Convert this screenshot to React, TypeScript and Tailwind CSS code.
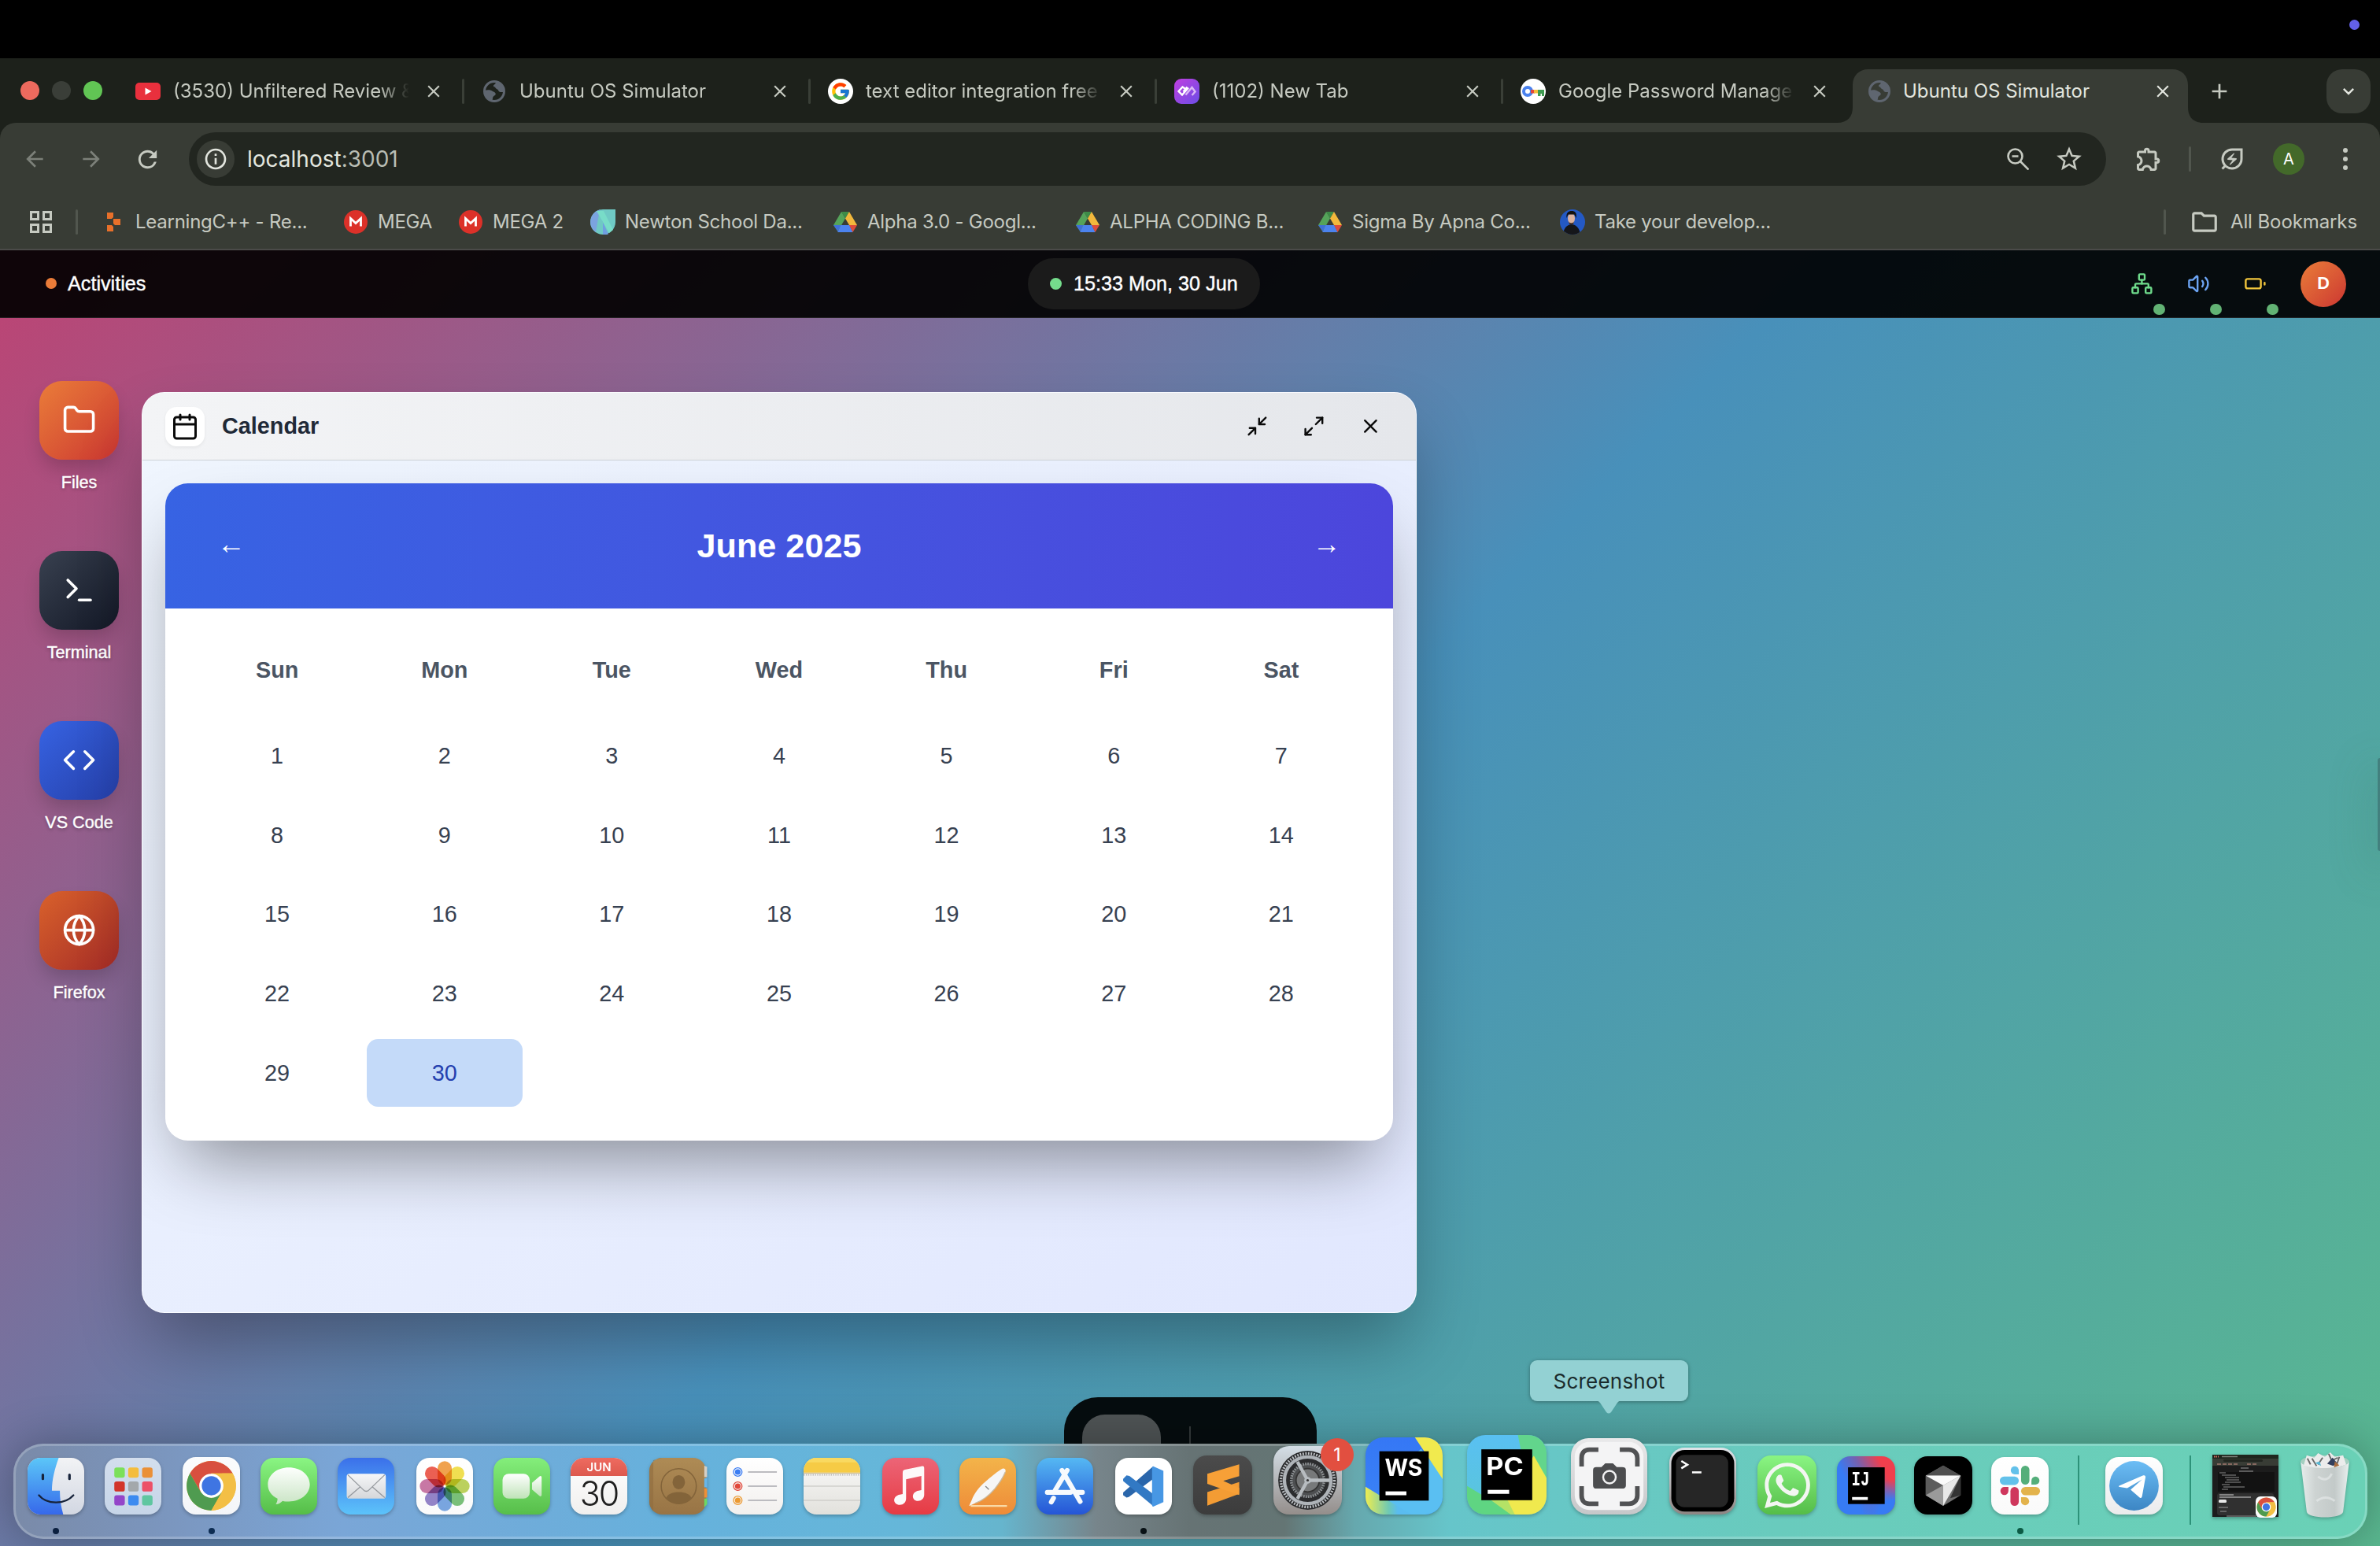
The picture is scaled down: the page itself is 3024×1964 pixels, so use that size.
import React from "react";
import {
  Calendar,
  Code,
  Folder,
  Globe,
  Maximize2,
  Minimize2,
  Network,
  Terminal,
  Volume2,
  X,
} from "lucide-react";
import {
  MdArrowBack,
  MdArrowForward,
  MdClose,
  MdAdd,
  MdKeyboardArrowDown,
  MdOutlineEnergySavingsLeaf,
  MdOutlineExtension,
  MdOutlineFolder,
  MdOutlineInfo,
  MdRefresh,
  MdStarOutline,
} from "react-icons/md";
import { FcGoogle } from "react-icons/fc";
import { FaWhatsapp } from "react-icons/fa";

/* ---------- favicons ---------- */

function YouTubeIcon() {
  return (
    <svg viewBox="0 0 32 32" className="h-8 w-8">
      <rect x="0" y="5" width="32" height="22" rx="5" fill="#e9303d" />
      <path d="M12.5 11.5v9l8-4.5z" fill="#fff" />
    </svg>
  );
}

function EarthIcon() {
  return (
    <svg viewBox="0 0 32 32" className="h-8 w-8">
      <circle cx="16" cy="16" r="12.500" fill="none" stroke="#5f6670" strokeWidth="3" />
      <path
        d="M17 3c2 2 0 4-1 4.500-2 1-1 3 1 3 1 3 3 2 4 4 1 3 4 3 8 2 0-8-5-13-12-13.500zM3 15c4-1 9-1 11 1 3 1 5 3 3 5-2 1-3 2-3 4 0 1-1 3-1 4C7 27 3 22 3 15z"
        fill="#5f6670"
      />
    </svg>
  );
}

function GoogleIcon() {
  return (
    <span className="flex h-8 w-8 items-center justify-center rounded-full bg-white">
      <FcGoogle className="h-[26px] w-[26px]" />
    </span>
  );
}

function PurpleIcon() {
  return (
    <svg viewBox="0 0 32 32" className="h-8 w-8">
      <defs>
        <linearGradient id="purple" x1="0" y1="0" x2="1" y2="1">
          <stop offset="0" stopColor="#c13fe0" />
          <stop offset="1" stopColor="#6b4de6" />
        </linearGradient>
      </defs>
      <rect width="32" height="32" rx="9" fill="url(#purple)" />
      <g fill="none" strokeWidth="2.400" strokeLinejoin="miter">
        <path d="M16.500 10.500l-5 6M13.500 12.500l-3-2-5 5.500 4.500 4.500 8-9" stroke="#fff" />
        <path d="M14.500 20.500l8-9.500 4 5.500-4 4.500" stroke="#d9b8f5" />
      </g>
    </svg>
  );
}

function KeyIcon() {
  return (
    <svg viewBox="0 0 32 32" className="h-8 w-8">
      <circle cx="16" cy="16" r="16" fill="#fff" />
      <circle cx="9" cy="16" r="5" fill="none" stroke="#4a82ee" strokeWidth="4" />
      <rect x="13" y="14" width="5" height="4.500" fill="#e2483a" />
      <rect x="17" y="14" width="6" height="4.500" fill="#f3bc3c" />
      <path d="M22 14h8v8h-3v-3h-1.500v3H22z" fill="#3f9b51" />
    </svg>
  );
}

function LearnIcon() {
  return (
    <svg viewBox="0 0 32 32" className="h-8 w-8">
      <g fill="#e8702a">
        <path d="M8 4h8v6l-2 2H8z" />
        <path d="M16 12h9v8h-7l-2-2z" />
        <path d="M8 20h6l2 2v6H8z" />
      </g>
    </svg>
  );
}

function MegaIcon() {
  return (
    <svg viewBox="0 0 32 32" className="h-8 w-8">
      <circle cx="16" cy="16" r="15" fill="#dc3129" />
      <path d="M9.500 21.500v-10l6.500 6 6.500-6v10" fill="none" stroke="#fff" strokeWidth="2.800" />
    </svg>
  );
}

function NewtonIcon() {
  return (
    <svg viewBox="0 0 32 32" className="h-8 w-8">
      <path d="M16 0h16v16a16 16 0 0 1-32 0A16 16 0 0 1 16 0z" fill="#6fc9c4" />
      <path d="M12 0.500A16 16 0 0 0 7 29z" fill="#7ba3e0" />
      <path d="M9 0.500l14 31a16 16 0 0 1-7 0.500V8z" fill="#6f9fe0" />
      <path d="M8 2h9l12 24-5 4z" fill="#78dcc8" />
    </svg>
  );
}

function DriveIcon() {
  return (
    <svg viewBox="0 0 32 32" className="h-8 w-8">
      <path d="M11 3h10l-5 8.500z" fill="#3d8b47" />
      <path d="M11 3l5 8.500L6.500 28 1 20z" fill="#55a35a" />
      <path d="M21 3l10 17H21l-5-8.500z" fill="#f2b83c" />
      <path d="M1 20h9.500L6.500 28z" fill="#3f6fd8" />
      <path d="M10.500 20h11l4 9H6.200z" fill="#4c83ee" />
      <path d="M21 20h10l-5.500 9z" fill="#dc4b3c" />
    </svg>
  );
}

function PersonIcon() {
  return (
    <svg viewBox="0 0 32 32" className="h-8 w-8">
      <defs>
        <clipPath id="person-clip">
          <circle cx="16" cy="16" r="16" />
        </clipPath>
      </defs>
      <g clipPath="url(#person-clip)">
        <rect width="32" height="32" fill="#2459c4" />
        <path d="M4 32c1-9 5-12 10-13 6 0 11 4 12 13z" fill="#15161a" />
        <ellipse cx="14.500" cy="11.500" rx="4.500" ry="7" fill="#dcb3a0" />
        <path d="M8.500 11C7.500 4 11 2 15 2s7 2 5.500 9l-2-4.500h-8z" fill="#14120f" />
        <path d="M11 15c1 3 6 3 7 0l-1 4h-5z" fill="#4a352c" />
      </g>
    </svg>
  );
}

/* ---------- browser chrome ---------- */

type Tab = { icon: React.ReactNode; title: string };

const TABS: Tab[] = [
  { icon: <YouTubeIcon />, title: "(3530) Unfiltered Review &" },
  { icon: <EarthIcon />, title: "Ubuntu OS Simulator" },
  { icon: <GoogleIcon />, title: "text editor integration free" },
  { icon: <PurpleIcon />, title: "(1102) New Tab" },
  { icon: <KeyIcon />, title: "Google Password Manager" },
];

function TabStrip() {
  return (
    <div className="flex h-[82px] bg-[#1d211b] pl-[26px] font-['Inter'] text-[24px]">
      <div className="flex h-[82px] w-[124px] gap-4">
        <span className="mt-[29px] h-6 w-6 rounded-full bg-[#ed6a5e]" />
        <span className="mt-[29px] h-6 w-6 rounded-full bg-[#3a3e38]" />
        <span className="mt-[29px] h-6 w-6 rounded-full bg-[#61c554]" />
      </div>
      {TABS.map((tab, i) => (
        <div key={i} className="flex h-[84px] w-[440px] items-center pl-[22px]">
          <span className="flex h-8 w-8 shrink-0 items-center">{tab.icon}</span>
          <span className="ml-4 w-[300px] overflow-hidden whitespace-nowrap text-[#c6cac1] [mask-image:linear-gradient(to_right,black_262px,transparent_300px)]">
            {tab.title}
          </span>
          <MdClose className="ml-[19px] h-[26px] w-[26px] shrink-0 text-[#c6cac1]" />
          {i < 4 && <span className="ml-[23px] h-8 w-[3px] shrink-0 rounded-full bg-[#3a3f37]" />}
        </div>
      ))}
      <div className="relative ml-1 flex h-[82px] w-[426px] items-center pl-[18px]">
        <svg viewBox="0 0 466 68" className="absolute -left-5 bottom-0 h-[68px] w-[466px]">
          <path
            d="M0 68c14 0 20-8 20-20V20C20 8 28 0 40 0h386c12 0 20 8 20 20v28c0 12 6 20 20 20z"
            fill="#383c35"
          />
        </svg>
        <span className="relative flex h-8 w-8 shrink-0 items-center pt-[2px]">
          <EarthIcon />
        </span>
        <span className="relative ml-[14px] w-[302px] whitespace-nowrap pt-[2px] text-[#e3e6df]">
          Ubuntu OS Simulator
        </span>
        <MdClose className="relative ml-[15px] mt-[2px] h-[26px] w-[26px] text-[#e3e6df]" />
      </div>
      <div className="flex h-[84px] flex-1 items-center justify-between pr-3">
        <MdAdd className="ml-6 h-8 w-8 text-[#c6cac1]" />
        <span className="flex h-14 w-14 items-center justify-center rounded-[20px] bg-[#383c35]">
          <MdKeyboardArrowDown className="h-7 w-7 text-[#e3e6df]" />
        </span>
      </div>
    </div>
  );
}

function Toolbar() {
  return (
    <div className="bg-[#1d211b]">
      <div className="flex h-[92px] items-center rounded-t-[20px] bg-[#383c35] pl-7">
        <MdArrowBack className="h-8 w-8 text-[#7c8079]" />
        <MdArrowForward className="ml-10 h-8 w-8 text-[#7c8079]" />
        <MdRefresh className="ml-[38px] h-[35px] w-[35px] text-[#c6cac1]" />
        <div className="ml-[35px] flex h-[68px] w-[2436px] items-center rounded-full bg-[#222620] pl-[10px]">
          <span className="flex h-12 w-12 items-center justify-center rounded-full bg-[#383c35]">
            <MdOutlineInfo className="h-8 w-8 text-[#e3e6df]" />
          </span>
          <span className="ml-4 font-['Inter'] text-[28px] leading-none text-[#e3e6df]">
            localhost<span className="text-[#b9bdb4]">:3001</span>
          </span>
          <svg viewBox="0 0 28 28" className="ml-auto h-7 w-7" fill="none" stroke="#c6cac1" strokeWidth="2.600">
            <circle cx="10.500" cy="10.500" r="9" />
            <path d="M6.500 10.500h8M17 17l10.500 10.500" />
          </svg>
          <MdStarOutline className="ml-[32px] mr-[28px] h-[38px] w-[38px] text-[#c6cac1]" />
        </div>
        <MdOutlineExtension className="ml-[36px] h-9 w-9 text-[#c6cac1]" />
        <span className="ml-[33px] h-8 w-[3px] rounded-full bg-[#51564e]" />
        <MdOutlineEnergySavingsLeaf className="ml-[34px] h-9 w-9 text-[#c6cac1]" />
        <span className="ml-[34px] flex h-10 w-10 items-center justify-center rounded-full bg-[#43692a] font-['Inter'] text-[20px] text-white">
          A
        </span>
        <span className="ml-[49px] flex flex-col gap-[5px]">
          <span className="h-[6px] w-[6px] rounded-full bg-[#c6cac1]" />
          <span className="h-[6px] w-[6px] rounded-full bg-[#c6cac1]" />
          <span className="h-[6px] w-[6px] rounded-full bg-[#c6cac1]" />
        </span>
      </div>
    </div>
  );
}

const BOOKMARKS = [
  { icon: <LearnIcon />, label: "LearningC++ - Re...", box: "w-[308px]" },
  { icon: <MegaIcon />, label: "MEGA", box: "w-[146px]" },
  { icon: <MegaIcon />, label: "MEGA 2", box: "w-[168px]" },
  { icon: <NewtonIcon />, label: "Newton School Da...", box: "w-[308px]" },
  { icon: <DriveIcon />, label: "Alpha 3.0 - Googl...", box: "w-[308px]" },
  { icon: <DriveIcon />, label: "ALPHA CODING B...", box: "w-[308px]" },
  { icon: <DriveIcon />, label: "Sigma By Apna Co...", box: "w-[308px]" },
  { icon: <PersonIcon />, label: "Take your develop...", box: "w-[308px]" },
];

function BookmarksBar() {
  return (
    <div className="flex h-[70px] items-center border-b-2 border-[#4b4b49] bg-[#383c35] pl-[38px] font-['Inter'] text-[24px] tracking-[-0.25px] text-[#c6cac1]">
      <div className="grid grid-cols-2 gap-1">
        <span className="h-3 w-3 border-[3px] border-[#c6cac1]" />
        <span className="h-3 w-3 border-[3px] border-[#c6cac1]" />
        <span className="h-3 w-3 border-[3px] border-[#c6cac1]" />
        <span className="h-3 w-3 border-[3px] border-[#c6cac1]" />
      </div>
      <span className="ml-[30px] mr-[29px] h-8 w-[3px] rounded-full bg-[#51564e]" />
      {BOOKMARKS.map((b, i) => (
        <div key={i} className={`flex shrink-0 items-center ${b.box}`}>
          {b.icon}
          <span className="ml-3 whitespace-nowrap">{b.label}</span>
        </div>
      ))}
      <span className="ml-auto h-8 w-[3px] rounded-full bg-[#51564e]" />
      <MdOutlineFolder className="ml-[30px] h-[38px] w-[38px]" />
      <span className="ml-[14px] mr-[29px] whitespace-nowrap tracking-[-0.1px]">All Bookmarks</span>
    </div>
  );
}

/* ---------- simulator desktop ---------- */

function BatteryIcon({ className }: { className?: string }) {
  return (
    <svg
      viewBox="0 0 24 24"
      className={className}
      fill="none"
      stroke="currentColor"
      strokeWidth="2"
      strokeLinecap="round"
    >
      <rect x="2" y="7" width="16" height="10" rx="2" />
      <path d="M22 11v2" />
    </svg>
  );
}

const STATUS = [
  { Icon: Network, tint: "text-[#6fdc8c]" },
  { Icon: Volume2, tint: "text-[#6ca4f3]" },
  { Icon: BatteryIcon, tint: "text-[#f0c53c]" },
];

function TopBar() {
  return (
    <div className="grid h-[86px] grid-cols-3 items-center border-b border-white/10 bg-black/92 text-[25.2px] text-white">
      <div className="flex items-center pl-[58px]">
        <span className="h-[14px] w-[14px] rounded-full bg-[#ea7c39]" />
        <span className="ml-[14px] [-webkit-text-stroke:0.4px_white]">Activities</span>
      </div>
      <div className="ml-[298px] flex h-[65px] w-[295px] items-center rounded-full bg-[#1b1b1b] pl-7">
        <span className="h-[15px] w-[15px] rounded-full bg-[#75dd8c]" />
        <span className="ml-[15px] whitespace-nowrap [-webkit-text-stroke:0.4px_white]">
          15:33 Mon, 30 Jun
        </span>
      </div>
      <div className="flex items-center justify-end gap-[14.400px] pr-[43px]">
        {STATUS.map(({ Icon, tint }, i) => (
          <span key={i} className="relative flex h-[57.600px] w-[57.600px] items-center justify-center">
            <Icon className={`h-[28.800px] w-[28.800px] ${tint}`} />
            <span className="absolute -bottom-[11px] right-0 h-[14.400px] w-[14.400px] rounded-full bg-[#62b374]" />
          </span>
        ))}
        <span className="ml-[14px] flex h-[58px] w-[58px] items-center justify-center rounded-full bg-linear-to-br from-[#ea7c39] to-[#cb3431] text-[21.600px] font-bold">
          D
        </span>
      </div>
    </div>
  );
}

const APPS = [
  { name: "Files", Icon: Folder, fill: "from-[#ea7c39] to-[#cb3431]" },
  { name: "Terminal", Icon: Terminal, fill: "from-[#394150] to-[#131826]" },
  { name: "VS Code", Icon: Code, fill: "from-[#3763e3] to-[#253fa8]" },
  { name: "Firefox", Icon: Globe, fill: "from-[#d9612b] to-[#a42a26]" },
];

function DesktopIcons() {
  return (
    <div className="w-[180px] shrink-0 pl-[50px] pt-[80px]">
      {APPS.map(({ name, Icon, fill }) => (
        <div key={name} className="flex h-[216px] w-[101px] flex-col items-center">
          <span
            className={`flex h-[100px] w-[101px] items-center justify-center rounded-[28.800px] bg-linear-to-br shadow-[0_14px_24px_-4px_rgba(0,0,0,0.2)] ${fill}`}
          >
            <Icon className="h-[43.200px] w-[43.200px] text-white" strokeWidth={2} />
          </span>
          <span className="mt-[14px] whitespace-nowrap text-[21.600px] leading-[29px] text-white [-webkit-text-stroke:0.4px_white] [text-shadow:0_2px_4px_rgba(0,0,0,0.3)]">
            {name}
          </span>
        </div>
      ))}
    </div>
  );
}

const DAYS = ["Sun", "Mon", "Tue", "Wed", "Thu", "Fri", "Sat"];

function CalendarWindow() {
  return (
    <div className="mt-[94px] h-[1170px] w-[1620px] overflow-hidden rounded-[28.800px] border border-white/80 bg-linear-to-br from-[#f0f6fe] to-[#e1e7fe] shadow-[0_45px_90px_-12px_rgba(0,0,0,0.33)]">
      <div className="flex h-[86px] items-center border-b border-[#ced3d8] bg-linear-to-r from-[#f3f4f6] to-[#e5e7eb] pl-[29px] pr-[22px]">
        <span className="flex h-[50px] w-[50px] items-center justify-center rounded-[14.400px] bg-white shadow-[0_2px_4px_rgba(0,0,0,0.06)]">
          <Calendar className="h-9 w-9 text-[#0a0a0a]" strokeWidth={2} />
        </span>
        <span className="ml-[22px] text-[28.800px] font-bold text-[#1f2937]">Calendar</span>
        <div className="ml-auto flex text-[#0a0a0a]">
          {[Minimize2, Maximize2, X].map((Icon, i) => (
            <span key={i} className="flex h-[72px] w-[72px] items-center justify-center">
              <Icon className="h-[28.800px] w-[28.800px]" strokeWidth={2} />
            </span>
          ))}
        </div>
      </div>
      <div className="px-[29px] pt-[29px]">
        <div className="h-[835px] rounded-[28.800px] bg-white shadow-[0_45px_90px_-22px_rgba(0,0,0,0.42)]">
          <div className="flex h-[159px] items-center justify-between rounded-t-[28.800px] bg-linear-to-r from-[#3763e3] to-[#4c46dc] px-[66px] text-white">
            <span className="pb-[5px] text-[36px] leading-none">←</span>
            <span className="text-[43.200px] font-bold">June 2025</span>
            <span className="pb-[5px] text-[36px] leading-none">→</span>
          </div>
          <div className="px-[43px] pt-[43px] text-[28.800px]">
            <div className="grid h-[72px] grid-cols-7 items-center gap-[14.400px] text-center font-bold text-[#4b5563]">
              {DAYS.map((d) => (
                <span key={d}>{d}</span>
              ))}
            </div>
            <div className="mt-[28.800px] grid grid-cols-7 gap-[14.400px] text-center text-[#374151]">
              {Array.from({ length: 30 }, (_, i) => i + 1).map((n) => (
                <span
                  key={n}
                  className={
                    n === 30
                      ? "rounded-[14.400px] bg-[#c4daf9] leading-[86.400px] text-[#2540af]"
                      : "leading-[86.400px]"
                  }
                >
                  {n}
                </span>
              ))}
            </div>
          </div>
        </div>
      </div>
    </div>
  );
}

/* ---------- dock icons, drawn on a 100-unit square ---------- */

const WHITE = "#fbfcfd";

function Tile({
  id,
  from,
  to,
  children,
}: {
  id: string;
  from: string;
  to: string;
  children?: React.ReactNode;
}) {
  return (
    <svg
      viewBox="0 0 100 100"
      className="h-full w-full overflow-visible drop-shadow-[0_2px_2px_rgba(0,0,0,0.25)]"
    >
      <defs>
        <linearGradient id={id} x1="0" y1="0" x2="0" y2="1">
          <stop offset="0" stopColor={from} />
          <stop offset="1" stopColor={to} />
        </linearGradient>
        <clipPath id={`${id}-clip`}>
          <rect width="100" height="100" rx="23" />
        </clipPath>
      </defs>
      <rect width="100" height="100" rx="23" fill={`url(#${id})`} />
      {children}
    </svg>
  );
}

function ChromeMark({ cx, cy, r }: { cx: number; cy: number; r: number }) {
  return (
    <g transform={`translate(${cx} ${cy}) scale(${r / 44})`}>
      <circle r="44" fill="#f3bf45" />
      <path d="M-38.100-22A44 44 0 0 1 38.100-22H0L-19 11z" fill="#d8503f" />
      <path d="M-38.100-22A44 44 0 0 0 0 44L19 11 0 22-19 11z" fill="#4f9b50" />
      <path d="M38.100-22A44 44 0 0 1 0 44L19 11V-22z" fill="#f3bf45" />
      <path d="M0-22h38.100l-19 33z" fill="#f3bf45" />
      <circle r="21.500" fill="#fff" />
      <circle r="17" fill="#3f75e2" />
    </g>
  );
}

function Finder() {
  return (
    <Tile id="finder" from="#f2f3f5" to="#d2d7e2">
      <defs>
        <linearGradient id="finder-face" x1="0" y1="0" x2="0" y2="1">
          <stop offset="0" stopColor="#5bc6f8" />
          <stop offset="1" stopColor="#3668ea" />
        </linearGradient>
      </defs>
      <path
        clipPath="url(#finder-clip)"
        d="M0 0h55C48 20 43 38 43 58h14c0 15 2 28 6 42H0z"
        fill="url(#finder-face)"
      />
      <g stroke="#17233a" fill="none" strokeLinecap="round">
        <path d="M27 30v7M74 30v7" strokeWidth="4.500" />
        <path d="M20 66c14 17 46 17 61 0" strokeWidth="3.200" />
      </g>
    </Tile>
  );
}

const PAD = ["#7be05a", "#f4bd3d", "#ea9038", "#d2352a", "#a3a8ab", "#ec5168", "#9445c9", "#3b8af0", "#5fc6a0"];

function Launchpad() {
  return (
    <Tile id="launchpad" from="#d3deed" to="#c6d5e8">
      {PAD.map((c, i) => (
        <rect key={c} x={17 + (i % 3) * 24.5} y={17 + Math.floor(i / 3) * 24.5} width="18.500" height="18" rx="4" fill={c} />
      ))}
    </Tile>
  );
}

function ChromeApp() {
  return (
    <Tile id="chrome" from={WHITE} to="#f3f5f8">
      <ChromeMark cx={50} cy={50} r={43} />
    </Tile>
  );
}

function Messages() {
  return (
    <Tile id="messages" from="#8af583" to="#55bd48">
      <defs>
        <linearGradient id="bubble" x1="0" y1="0" x2="0" y2="1">
          <stop offset="0" stopColor="#fdfffd" />
          <stop offset="1" stopColor="#c9e4c4" />
        </linearGradient>
      </defs>
      <path
        d="M50 17c-21 0-37 13-37 30 0 11 6 20 17 25 0 4-1 7-3 10 5 0 9-3 12-6 3 1 7 1 11 1 21 0 37-13 37-30S71 17 50 17z"
        fill="url(#bubble)"
      />
    </Tile>
  );
}

function Mail() {
  return (
    <Tile id="mail" from="#3b70ea" to="#5cc3fa">
      <defs>
        <linearGradient id="envelope" x1="0" y1="0" x2="0" y2="1">
          <stop offset="0" stopColor="#f6f7f8" />
          <stop offset="1" stopColor="#d5d7da" />
        </linearGradient>
      </defs>
      <rect x="16" y="28" width="69" height="44" rx="5" fill="url(#envelope)" />
      <path
        d="M18 30l27 26c3 4 8 4 11 0l27-26M18 70l22-19M83 70L61 51"
        stroke="#94989d"
        strokeWidth="1.800"
        fill="none"
      />
    </Tile>
  );
}

const PETALS = ["#f0993a", "#f0dd3e", "#b6cf4c", "#6dbb6c", "#6c9fe0", "#8a78c4", "#c46a9c", "#ea4e40"];

function Photos() {
  return (
    <Tile id="photos" from="#ffffff" to="#fafafa">
      {PETALS.map((c, i) => (
        <rect
          key={c}
          x="37.500"
          y="6"
          width="25"
          height="42"
          rx="12.500"
          fill={c}
          className="mix-blend-multiply"
          opacity="0.9"
          transform={`rotate(${i * 45} 50 50)`}
        />
      ))}
    </Tile>
  );
}

function FaceTime() {
  return (
    <Tile id="facetime" from="#84ee7b" to="#57be4a">
      <defs>
        <linearGradient id="camera" x1="0" y1="0" x2="0" y2="1">
          <stop offset="0" stopColor="#ffffff" />
          <stop offset="1" stopColor="#bfe3b8" />
        </linearGradient>
      </defs>
      <rect x="16" y="28" width="48" height="44" rx="11" fill="url(#camera)" />
      <path d="M68 44l13-11c2-2 4-1 4 2v30c0 3-2 4-4 2L68 56z" fill="url(#camera)" />
    </Tile>
  );
}

function CalendarApp() {
  return (
    <div className="h-full w-full overflow-hidden rounded-[17px] bg-linear-to-b from-white to-[#f0efee] text-center drop-shadow-[0_2px_2px_rgba(0,0,0,0.25)]">
      <div className="h-[23px] bg-linear-to-b from-[#ee6b60] to-[#dd594e] font-['Inter'] text-[15px] font-semibold leading-[24px] text-white">
        JUN
      </div>
      <div className="font-['Inter'] text-[43px] font-light leading-[45px] tracking-[-2px] text-[#1f1f1f]">30</div>
    </div>
  );
}

function Contacts() {
  return (
    <Tile id="contacts" from="#ae8b55" to="#987445">
      <path d="M97 14l5 2v18h-5z" fill="#d4cfc6" />
      <path d="M97 36h5v16h-5z" fill="#68b7ea" />
      <path d="M97 54h5v16h-5z" fill="#ee8f35" />
      <path d="M97 72h5v10l-5 5z" fill="#6cd765" />
      <path d="M23 0A23 23 0 0 0 0 23v54a23 23 0 0 0 7 17V4z" fill="#8f6c3f" opacity="0.6" />
      <circle cx="52" cy="50" r="31" fill="none" stroke="#83643a" strokeWidth="2.200" />
      <ellipse cx="52" cy="43" rx="11" ry="12.500" fill="#83643a" />
      <path d="M30 71c3-14 41-14 44 0-12 14-32 14-44 0z" fill="#83643a" />
    </Tile>
  );
}

function Reminders() {
  return (
    <Tile id="reminders" from="#ffffff" to="#f2f0ee">
      {["#3b7df3", "#e0483b", "#ec9a33"].map((c, i) => (
        <g key={c}>
          <circle cx="20" cy={25 + i * 25} r="7.500" fill="none" stroke={c} strokeWidth="1.800" />
          <circle cx="20" cy={25 + i * 25} r="5" fill={c} />
          <path d={`M38 ${25 + i * 25}h51`} stroke="#bcbcc0" strokeWidth="2.500" />
        </g>
      ))}
    </Tile>
  );
}

function Notes() {
  return (
    <Tile id="notes" from="#fafafa" to="#e2e1dc">
      <g clipPath="url(#notes-clip)">
        <rect width="100" height="26" fill="#f6cb45" />
        <rect width="100" height="8" fill="#f9d960" />
        <path d="M0 30h100" stroke="#b5b3ae" strokeWidth="2.500" strokeDasharray="2 2" />
        <path d="M0 27h100" stroke="#b59a52" strokeWidth="1" />
        <path d="M0 50h100M0 75h100" stroke="#d0cfcb" strokeWidth="2" />
      </g>
    </Tile>
  );
}

function Music() {
  return (
    <Tile id="music" from="#ec6577" to="#e63b44">
      <path
        d="M36 27c0-4 1-5 4-6l29-6c4-1 5 0 5 4v46c0 7-5 11-11 11s-9-4-9-8c0-5 4-9 10-10l5-1V32l-27 6v34c0 7-5 11-11 11s-10-4-10-8c0-5 4-9 10-10l5-1z"
        fill="#fdf9fa"
      />
    </Tile>
  );
}

function Pages() {
  return (
    <Tile id="pages" from="#f3b44a" to="#ee8b38">
      <path d="M20 85h64" stroke="#f9d9a6" strokeWidth="3" />
      <path d="M74 20c4-3 9-1 7 5-4 10-10 19-18 29C52 67 40 76 28 80l-11 5 5-11c4-11 13-23 24-32 9-8 18-16 28-22z" fill="#f6f6f6" />
      <path d="M81 25c-4 10-10 19-18 29C52 67 40 76 28 80" fill="none" stroke="#c9b89e" strokeWidth="2" />
      <path d="M46 50l6 6" stroke="#8a8a8a" strokeWidth="2" />
    </Tile>
  );
}

function AppStore() {
  return (
    <Tile id="appstore" from="#55b8f3" to="#2555d6">
      <g stroke="#f7fafd" strokeWidth="8.500" strokeLinecap="round">
        <path d="M54 22L33 57M45 22l32 55M19 61h41M71 61h10M30 71l-4 7" />
      </g>
    </Tile>
  );
}

function VSCode() {
  return (
    <Tile id="vscode" from="#ffffff" to="#ffffff">
      <path d="M67 15L14 61v5l6 4 4-1 43-32z" fill="#2a66ab" />
      <path d="M14 37l6-6 5 1 42 32v21L14 41z" fill="#3279c4" />
      <path d="M67 15l18 8v55l-18 8c-1 0-2-1-2-2V17z" fill="#4797e4" />
    </Tile>
  );
}

function Sublime() {
  return (
    <Tile id="sublime" from="#4b4b4b" to="#3c3c3c">
      <path d="M24 62l54-17v20L24 85z" fill="#f39c34" />
      <path d="M24 31l54-16v20L51 43l27 12v12L24 48z" fill="#f7a037" />
    </Tile>
  );
}

function Settings() {
  return (
    <Tile id="settings" from="#d4dee6" to="#948e8b">
      <circle cx="50" cy="50" r="43" fill="#2b2c2e" />
      <circle cx="50" cy="50" r="39" fill="none" stroke="#c0c4c8" strokeWidth="4" strokeDasharray="2 2" />
      <circle cx="50" cy="50" r="34" fill="none" stroke="#aeb3b8" strokeWidth="5" />
      <circle cx="50" cy="50" r="24" fill="#4d4f51" stroke="#8d9194" strokeWidth="4" strokeDasharray="2 1.500" />
      <circle cx="50" cy="50" r="17" fill="#77797a" stroke="#333" strokeWidth="2" />
      <path d="M50 50h32M50 50L35 23M50 50L35 77" stroke="#b7bcc0" strokeWidth="5" />
      <circle cx="50" cy="50" r="5" fill="#b7bcc0" />
      <circle cx="50" cy="50" r="1.800" fill="#333" />
    </Tile>
  );
}

function WebStorm() {
  return (
    <Tile id="webstorm" from="#3577f5" to="#3b84f6">
      <defs>
        <linearGradient id="ws-low" x1="0" y1="0" x2="1" y2="0">
          <stop offset="0" stopColor="#eded50" />
          <stop offset="0.500" stopColor="#6fc9b4" />
          <stop offset="0.700" stopColor="#5abcf0" />
        </linearGradient>
      </defs>
      <g clipPath="url(#webstorm-clip)">
        <path d="M72 15L100 50v50H40L20 60z" fill="#5abff2" />
        <path d="M64 0h36v54z" fill="#f1ea4e" />
        <path d="M0 64l60 36H0z" fill="url(#ws-low)" />
      </g>
      <rect x="18" y="18" width="64" height="64" fill="#000" />
      <text x="25" y="50" className="font-['Inter'] font-bold" fontSize="31" textLength="49" lengthAdjust="spacingAndGlyphs" fill="#fff">
        WS
      </text>
      <rect x="26" y="70" width="27" height="5" fill="#fff" />
    </Tile>
  );
}

function PyCharm() {
  return (
    <Tile id="pycharm" from="#59c0f2" to="#5ac6d8">
      <g clipPath="url(#pycharm-clip)">
        <path d="M64 0h36v56L70 30z" fill="#62d58c" />
        <path d="M84 26l16 28v46H40L62 60z" fill="#f0e94e" />
        <path d="M0 64l60 36H0z" fill="#5fd582" />
        <path d="M30 82l25 18h5L50 80z" fill="#b5e266" />
      </g>
      <rect x="18" y="18" width="64" height="64" fill="#000" />
      <text x="24" y="50" className="font-['Inter'] font-bold" fontSize="31" textLength="47" lengthAdjust="spacingAndGlyphs" fill="#fff">
        PC
      </text>
      <rect x="26" y="69" width="27" height="5" fill="#fff" />
    </Tile>
  );
}

function Screenshot() {
  return (
    <Tile id="screenshot" from="#e9e9ea" to="#c6c7c9">
      <rect x="5" y="5" width="90" height="89" rx="19" fill="#f4f4f5" />
      <g fill="none" stroke="#515254" strokeWidth="6" strokeLinecap="butt">
        <path d="M14 37V26c0-7 4-11 10-11h12M64 15h12c6 0 11 4 11 11v11M87 63v12c0 7-5 11-11 11H64M36 86H24c-6 0-10-4-10-11V63" />
      </g>
      <path d="M29 42c0-3 2-4 4-4h7l5-5h10l5 5h7c3 0 5 1 5 4v20c0 3-2 4-5 4H33c-2 0-4-1-4-4z" fill="#4c4d4f" />
      <circle cx="50.500" cy="51" r="9.500" fill="#f4f4f5" />
      <circle cx="50.500" cy="51" r="7" fill="#4c4d4f" />
    </Tile>
  );
}

function TerminalApp() {
  return (
    <Tile id="terminal" from="#dfe3e8" to="#8d8583">
      <rect x="3" y="3.500" width="94" height="92" rx="20" fill="#000" />
      <rect x="10" y="11" width="78" height="78" rx="12" fill="#262626" />
      <path d="M18 20l9 5.500-9 5.500" stroke="#fff" strokeWidth="3" fill="none" />
      <path d="M34 37h14" stroke="#fff" strokeWidth="3" />
    </Tile>
  );
}

function WhatsApp() {
  return (
    <div className="flex h-full w-full items-center justify-center rounded-[17px] bg-linear-to-b from-[#8af583] to-[#55bd48] drop-shadow-[0_2px_2px_rgba(0,0,0,0.25)]">
      <FaWhatsapp className="h-[66px] w-[66px] text-[#f3f6f2]" />
    </div>
  );
}

function IntelliJ() {
  return (
    <svg viewBox="0 0 100 100" className="h-full w-full drop-shadow-[0_2px_2px_rgba(0,0,0,0.25)]">
      <defs>
        <linearGradient id="ij" x1="0.100" y1="0.600" x2="0.900" y2="0.200">
          <stop offset="0.150" stopColor="#377bf4" />
          <stop offset="0.500" stopColor="#7561b0" />
          <stop offset="0.900" stopColor="#f03f4d" />
        </linearGradient>
        <radialGradient id="ij-corner" cx="0.950" cy="1" r="0.600">
          <stop offset="0" stopColor="#377bf4" />
          <stop offset="0.400" stopColor="#377bf4" />
          <stop offset="1" stopColor="#377bf4" stopOpacity="0" />
        </radialGradient>
      </defs>
      <rect width="100" height="100" rx="23" fill="url(#ij)" />
      <rect width="100" height="100" rx="23" fill="url(#ij-corner)" />
      <rect x="19" y="19" width="63" height="63" fill="#000" />
      <text x="25" y="50" fontFamily="Liberation Mono" fontWeight="700" fontSize="34" textLength="31" lengthAdjust="spacingAndGlyphs" fill="#fff">
        IJ
      </text>
      <rect x="26" y="70" width="27" height="5" fill="#fff" />
    </svg>
  );
}

function Cursor() {
  return (
    <Tile id="cursor" from="#000000" to="#000000">
      <path d="M50 16l30 17v34L50 85 20 67V33z" fill="#6f6f6f" />
      <path d="M50 16l30 17H20z" fill="#4f4f4f" />
      <path d="M20 33v34l30-17z" fill="#5c5c5c" />
      <path d="M80 33v34L62 72z" fill="#333" />
      <path d="M20 67l30-17v35z" fill="#9a9a9a" />
      <path d="M50 85V50L80 33z" fill="#e8e8e8" />
      <path d="M20 33h60L50 50z" fill="#fafafa" />
    </Tile>
  );
}

function Slack() {
  return (
    <Tile id="slack" from="#ffffff" to="#fafafa">
      <g fill="#63c1ea">
        <rect x="15" y="34" width="33" height="14.500" rx="7.250" />
        <path d="M48 30h-7a7 7 0 1 1 7-7z" />
      </g>
      <g fill="#54ae7a">
        <rect x="52" y="15" width="14.500" height="33" rx="7.250" />
        <path d="M70 48v-7a7 7 0 1 1 7 7z" />
      </g>
      <g fill="#e3b34c">
        <rect x="52" y="52" width="33" height="14.500" rx="7.250" />
        <path d="M52 70h7a7 7 0 1 1-7 7z" />
      </g>
      <g fill="#cf375d">
        <rect x="33.500" y="52" width="14.500" height="33" rx="7.250" />
        <path d="M30 52v7a7 7 0 1 1-7-7z" />
      </g>
    </Tile>
  );
}

function Telegram() {
  return (
    <Tile id="telegram" from="#ffffff" to="#ebebec">
      <defs>
        <linearGradient id="tg" x1="0" y1="0" x2="0" y2="1">
          <stop offset="0" stopColor="#6cbdf5" />
          <stop offset="1" stopColor="#3c86c4" />
        </linearGradient>
      </defs>
      <circle cx="50" cy="50" r="43" fill="url(#tg)" />
      <path d="M24 50l42-18c3-1 4 1 4 3l-6 33c-1 4-3 4-5 2L44 57l20-18-26 15-13-2c-2 0-2-1-1-2z" fill="#fff" />
    </Tile>
  );
}

function MinimizedWindow() {
  return (
    <svg viewBox="0 0 84 79" className="h-full w-full overflow-visible drop-shadow-[0_2px_2px_rgba(0,0,0,0.3)]">
      <rect width="84" height="79" fill="#1c1c1c" />
      <rect width="84" height="5" fill="#1f261e" />
      <rect y="5" width="84" height="9" fill="#383c35" />
      <path d="M2 2.500h6" stroke="#d96b5e" strokeWidth="2" strokeDasharray="1.500 1" />
      <path d="M12 2.500h20" stroke="#7e827b" strokeWidth="1.500" />
      <rect x="14" y="6" width="50" height="3" rx="1.500" fill="#222620" />
      <path d="M6 12h26M44 12h14" stroke="#a1786f" strokeWidth="1.500" strokeDasharray="5 2" />
      <path d="M36 17h10M34 21h18" stroke="#9a9a9a" strokeWidth="1.200" />
      <rect x="7" y="22" width="72" height="25" fill="#121212" />
      <g stroke="#8b8b8b" strokeWidth="1.200" fill="none">
        <path d="M9 23h8M12 26h18M16 29h18M18 32h16M16 35h20M12 38h10M14 41h27M12 44h8" />
      </g>
      <rect x="6" y="49" width="72" height="28" rx="3" fill="#303030" />
      <path d="M9 51h18M9 54h40" stroke="#d5d5d5" strokeWidth="1.200" />
      <rect x="8" y="57" width="10" height="4" rx="1.500" fill="#e8e8e8" />
      <path d="M8 67h12M10 72h8M18 78h38" stroke="#9a9a9a" strokeWidth="1" />
      <rect x="55" y="53" width="27" height="27" rx="6" fill="#fbfcfd" />
      <ChromeMark cx={68.5} cy={66.5} r={12} />
    </svg>
  );
}

function Trash() {
  return (
    <svg viewBox="0 0 66 86" className="h-full w-full overflow-visible drop-shadow-[0_2px_2px_rgba(0,0,0,0.25)]">
      <defs>
        <linearGradient id="bin" x1="0" y1="0" x2="1" y2="0">
          <stop offset="0" stopColor="#eef0f0" />
          <stop offset="0.300" stopColor="#d4d6d6" />
          <stop offset="0.700" stopColor="#c9cccc" />
          <stop offset="1" stopColor="#f1f3f3" />
        </linearGradient>
      </defs>
      <ellipse cx="33" cy="12" rx="32" ry="8" fill="#a5cfc0" />
      <path d="M1 12c2 11 62 11 64 0l-8 66c-1 10-47 10-48 0z" fill="url(#bin)" opacity="0.95" />
      <path d="M5 17L9 4l10 3 5-6 9 5 7-6 6 6 11-2 4 12c-14 6-42 6-56 1z" fill="#ececec" />
      <path d="M16 8l6 10M30 7l-6 9M38 2l4 9 8-4M52 6l-4 12M10 8l4 8" stroke="#6a6a6a" strokeWidth="2" fill="none" />
      <path d="M36 15l7-8 6 7-5 4z" fill="#33405e" />
      <path d="M20 14l6-2 2 6z" fill="#56b7d4" />
      <path d="M46 12l6 5-7 3z" fill="#a86c3e" />
      <path d="M24 32c8 6 14 4 18-4M22 64c8-6 16-6 24 0" stroke="#f0f1f1" strokeWidth="3" fill="none" opacity="0.5" />
    </svg>
  );
}

/* Each entry carries its own size and the gap to the icon before it. */
const DOCK: { box: string; icon: React.ReactNode; dot?: string; badge?: string }[] = [
  { box: "ml-[15px] h-[72px] w-[72px]", icon: <Finder />, dot: "bg-[#0b1f3f]" },
  { box: "ml-[26px] h-[72px] w-[72px]", icon: <Launchpad /> },
  { box: "ml-[27px] h-[73px] w-[73px]", icon: <ChromeApp />, dot: "bg-[#0c2c52]" },
  { box: "ml-[26px] h-[72px] w-[72px]", icon: <Messages /> },
  { box: "ml-[26px] h-[72px] w-[72px]", icon: <Mail /> },
  { box: "ml-[28px] h-[72px] w-[72px]", icon: <Photos /> },
  { box: "ml-[26px] h-[72px] w-[72px]", icon: <FaceTime /> },
  { box: "ml-[26px] h-[72px] w-[72px]", icon: <CalendarApp /> },
  { box: "ml-[28px] h-[72px] w-[72px]", icon: <Contacts /> },
  { box: "ml-[26px] h-[72px] w-[72px]", icon: <Reminders /> },
  { box: "ml-[26px] h-[72px] w-[72px]", icon: <Notes /> },
  { box: "ml-[28px] h-[72px] w-[72px]", icon: <Music /> },
  { box: "ml-[26px] h-[72px] w-[72px]", icon: <Pages /> },
  { box: "ml-[26px] h-[72px] w-[72px]", icon: <AppStore /> },
  { box: "ml-[28px] h-[72px] w-[72px]", icon: <VSCode />, dot: "bg-[#081115]" },
  { box: "ml-[27px] h-[75px] w-[75px]", icon: <Sublime /> },
  { box: "ml-[27px] h-[87px] w-[87px]", icon: <Settings />, badge: "1" },
  { box: "ml-[30px] h-[98px] w-[98px]", icon: <WebStorm /> },
  { box: "ml-[31px] h-[101px] w-[101px]", icon: <PyCharm /> },
  { box: "ml-[31px] h-[97px] w-[97px]", icon: <Screenshot /> },
  { box: "ml-[28px] h-[85px] w-[85px]", icon: <TerminalApp /> },
  { box: "ml-[27px] h-[75px] w-[75px]", icon: <WhatsApp /> },
  { box: "ml-[26px] h-[74px] w-[74px]", icon: <IntelliJ /> },
  { box: "ml-[24px] h-[74px] w-[74px]", icon: <Cursor /> },
  { box: "ml-[24px] h-[73px] w-[73px]", icon: <Slack />, dot: "bg-[#0b5a44]" },
];

function Dock() {
  return (
    <div className="absolute bottom-[9px] left-[17px] flex h-[121px] w-[2991px] items-end rounded-[38px] border-[3px] border-white/20 shadow-[0_0_60px_rgba(0,0,0,0.3)] [background:linear-gradient(to_right,#7a8aa8_0%,#7b97c0_7%,#7aa6d7_14%,#66b1dc_28%,#65b7d9_38%,#66b5cd_42%,#77858b_46%,#667374_50%,#647574_54%,#66a8ae_57%,#66c5ca_61%,#69cbbd_75%,#6ad1b6_100%)_border-box]">
      {DOCK.map((item, i) => (
        <span key={i} className={`relative mb-[28px] shrink-0 ${item.box}`}>
          {item.icon}
          {item.dot && (
            <span className={`absolute -bottom-[25px] left-[calc(50%-4px)] h-2 w-2 rounded-full ${item.dot}`} />
          )}
          {item.badge && (
            <span className="absolute -right-[15px] -top-[10px] flex h-[42px] w-[42px] items-center justify-center rounded-full bg-[#e24f40] font-['Inter'] text-[23px] text-white">
              {item.badge}
            </span>
          )}
        </span>
      ))}
      <span className="mb-[15px] ml-[37px] h-[88px] w-[2px] bg-[#2d9279]" />
      <span className="mb-[28px] ml-[33px] h-[73px] w-[73px]">
        <Telegram />
      </span>
      <span className="mb-[15px] ml-[34px] h-[88px] w-[2px] bg-[#2d9279]" />
      <span className="mb-[25px] ml-[27px] h-[79px] w-[84px]">
        <MinimizedWindow />
      </span>
      <span className="mb-[24px] ml-[26px] h-[83px] w-[66px]">
        <Trash />
      </span>
      <div className="absolute -top-[109px] left-[1924px] flex h-[52px] w-[201px] items-center justify-center rounded-[9px] bg-[#93d1d3] font-['Inter'] text-[26px] tracking-[0.2px] text-[#1a2b2c] shadow-[0_1px_5px_rgba(0,0,0,0.35)]">
        Screenshot
        <svg viewBox="0 0 32 17" className="absolute left-[84px] top-[51px] h-[17px] w-8">
          <path d="M0 0h32c-4 1-5 3-7 6l-6 9c-2 2-4 2-6 0L7 6C5 3 4 1 0 0z" fill="#93d1d3" />
        </svg>
      </div>
    </div>
  );
}

export default function App() {
  return (
    <div className="relative flex h-[1964px] w-[3024px] flex-col overflow-hidden bg-black font-['Liberation_Sans',Arial,sans-serif]">
      <div className="flex h-[74px] shrink-0 items-start justify-end pr-[26px] pt-[25px]">
        <span className="h-[13px] w-[13px] rounded-full bg-[#6360e8]" />
      </div>
      <TabStrip />
      <Toolbar />
      <BookmarksBar />
      <div className="relative flex-1 bg-[linear-gradient(135deg,#be4373_0%,#4890ba_50%,#5ab890_100%)]">
        <TopBar />
        <div className="flex">
          <DesktopIcons />
          <CalendarWindow />
        </div>
        <div className="absolute left-[1352px] top-[1457px] flex h-[180px] w-[321px] rounded-[43px] bg-[#060d0f] pl-[23px] pt-[22px]">
          <span className="h-[100px] w-[100px] rounded-[28.800px] bg-[#4f5455]" />
          <span className="ml-[36px] mt-[15px] h-[70px] w-[2px] bg-[#34393a]" />
        </div>
        <div className="absolute right-0 top-[645px] h-[118px] w-[3px] rounded-l-full bg-[#43807e] shadow-[0_18px_50px_10px_rgba(60,110,90,0.25)]" />
      </div>
      <Dock />
    </div>
  );
}
